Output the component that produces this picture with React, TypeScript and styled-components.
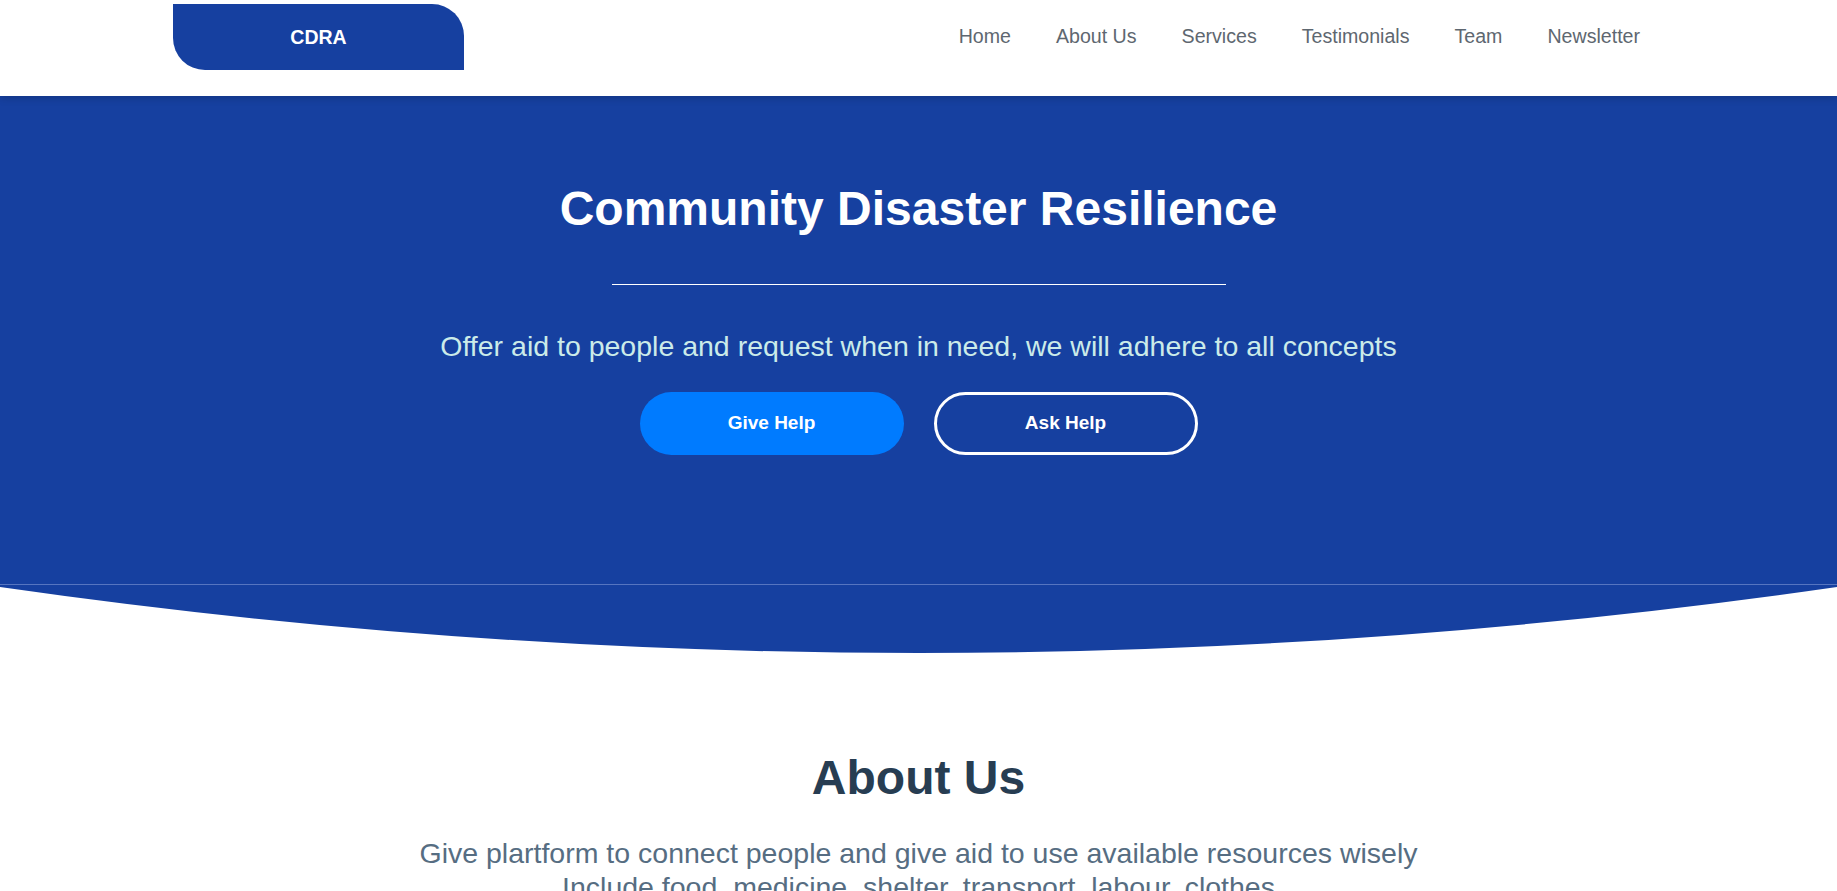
import React from "react";
import styled, { createGlobalStyle } from "styled-components";

const Global = createGlobalStyle`
  html, body { margin: 0; padding: 0; background: #ffffff; }
  body { font-family: "Liberation Sans", Arial, sans-serif; overflow: hidden; }
  * { box-sizing: border-box; }
`;

const BRAND = "#1640a0";

const Header = styled.header`
  position: relative;
  z-index: 2;
  height: 96px;
  padding: 4px 173px 26px;
  background: #ffffff;
  display: flex;
  align-items: center;
  justify-content: space-between;
  box-shadow: 0 2px 8px rgba(0, 0, 0, 0.18);
`;

const Logo = styled.div`
  width: 291px;
  height: 66px;
  background: ${BRAND};
  border-radius: 0 32px 0 32px;
  display: flex;
  align-items: center;
  justify-content: center;
  color: #ffffff;
  font-weight: 700;
  font-size: 19.5px;
`;

const Nav = styled.nav`
  display: flex;
  gap: 45px;
  margin-right: 24px;
`;

const NavLink = styled.a`
  font-size: 19.6px;
  color: #5e6770;
  text-decoration: none;
  line-height: 1;
`;

const Hero = styled.section`
  background: ${BRAND};
  height: 488px;
  padding-top: 84px;
  display: flex;
  flex-direction: column;
  align-items: center;
`;

const Title = styled.h1`
  margin: 0;
  font-size: 48px;
  line-height: 1.2;
  font-weight: 700;
  color: #ffffff;
`;

const Rule = styled.div`
  width: 614px;
  height: 1px;
  background: #ffffff;
  margin-top: 46px;
`;

const Lead = styled.p`
  margin: 45px 0 0;
  font-size: 28.5px;
  line-height: normal;
  color: #cbebe9;
`;

const Buttons = styled.div`
  display: flex;
  gap: 30px;
  margin-top: 29px;
`;

const Button = styled.a<{ $outline?: boolean }>`
  width: 264px;
  height: 63px;
  border-radius: 32px;
  display: flex;
  align-items: center;
  justify-content: center;
  font-size: 19px;
  font-weight: 700;
  color: #ffffff;
  text-decoration: none;
  background: ${(p) => (p.$outline ? "transparent" : "#007bff")};
  border: ${(p) => (p.$outline ? "3px solid #ffffff" : "none")};
`;

const Seam = styled.div`
  height: 1px;
  background: #5675c0;
`;

const Wave = styled.svg`
  display: block;
  width: 100%;
  height: 70px;
`;

const About = styled.section`
  padding-top: 94px;
  display: flex;
  flex-direction: column;
  align-items: center;
  text-align: center;
`;

const AboutTitle = styled.h2`
  margin: 0;
  font-size: 48px;
  line-height: 1.2;
  font-weight: 700;
  color: #273d52;
`;

const AboutText = styled.p`
  margin: 29px 0 0;
  font-size: 28.5px;
  line-height: 1.2;
  color: #566d82;
`;

export default function App() {
  const links = ["Home", "About Us", "Services", "Testimonials", "Team", "Newsletter"];
  return (
    <>
      <Global />
      <Header>
        <Logo>CDRA</Logo>
        <Nav>
          {links.map((l) => (
            <NavLink key={l} href="#">
              {l}
            </NavLink>
          ))}
        </Nav>
      </Header>
      <Hero>
        <Title>Community Disaster Resilience</Title>
        <Rule />
        <Lead>Offer aid to people and request when in need, we will adhere to all concepts</Lead>
        <Buttons>
          <Button href="#">Give Help</Button>
          <Button href="#" $outline>
            Ask Help
          </Button>
        </Buttons>
      </Hero>
      <Seam />
      <Wave viewBox="0 0 1837 70" preserveAspectRatio="none">
        <path d="M0 0 H1837 V2 Q918.5 134 0 2 Z" fill={BRAND} />
      </Wave>
      <About>
        <AboutTitle>About Us</AboutTitle>
        <AboutText>
          Give plartform to connect people and give aid to use available resources wisely
          <br />
          Include food, medicine, shelter, transport, labour, clothes
        </AboutText>
      </About>
    </>
  );
}
